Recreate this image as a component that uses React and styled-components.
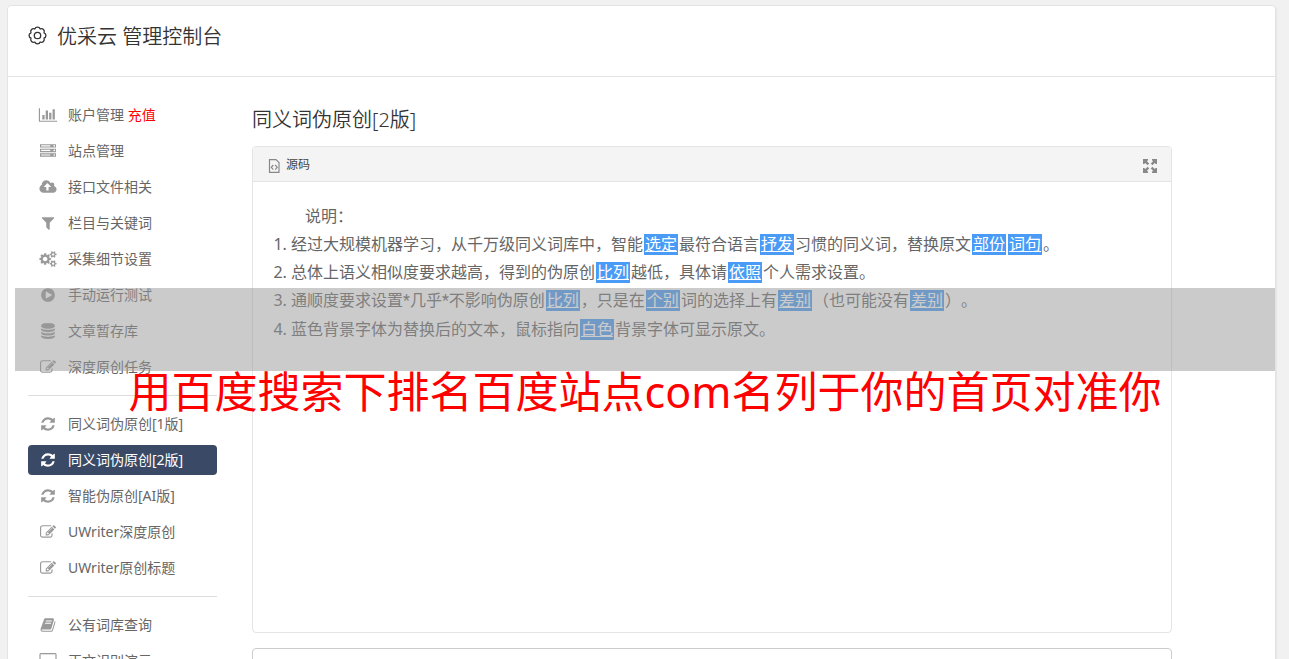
import React from "react";
import styled, { createGlobalStyle } from "styled-components";

const Global = createGlobalStyle`
  * { box-sizing: border-box; }
  body {
    margin: 0;
    background: #f1f1f1;
    color: #666;
    font-family: "Noto Sans", "Noto Sans CJK SC", sans-serif;
    font-size: 14px;
    text-spacing-trim: space-all;
  }
`;

const Page = styled.div`
  position: relative;
  height: 100vh;
  overflow: hidden;
  padding: 5px 13px 0 7px;
`;

const Card = styled.div`
  min-height: 100vh;
  background: #fff;
  border: 1px solid #e4e4e4;
  border-radius: 4px;
  box-shadow: 1px 1px 0 #e6e6e6;
`;

const CardHeader = styled.header`
  display: flex;
  align-items: center;
  gap: 10px;
  padding: 16px 20px 24px;
  border-bottom: 1px solid #e4e4e4;
  color: #333;

  svg {
    margin-bottom: 3px;
  }
`;

const Title = styled.h1`
  margin: 0;
  font-size: 20px;
  font-weight: 350;
  line-height: 30px;
`;

const Columns = styled.div`
  display: flex;
  gap: 35px;
  padding: 23px 103px 0 20px;
`;

const Sidebar = styled.nav`
  flex: 0 0 189px;
`;

const Menu = styled.ul`
  display: flex;
  flex-direction: column;
  gap: 6px;
  margin: 0;
  padding: 0;
  list-style: none;
`;

const Divider = styled.li`
  height: 1px;
  margin: 7px 0;
  background: #ddd;
`;

const MenuLink = styled.a`
  display: flex;
  align-items: center;
  gap: 10px;
  height: 30px;
  padding: 0 10px;
  border-radius: 4px;
  line-height: 30px;
  white-space: nowrap;
  text-decoration: none;
  color: ${(p) => (p.$active ? "#fff" : "#666")};
  background: ${(p) => (p.$active ? "#3a4a66" : "transparent")};

  svg {
    flex: 0 0 20px;
    height: 16px;
    fill: ${(p) => (p.$active ? "#fff" : "#999")};
  }
`;

const Recharge = styled.span`
  color: #f00;
`;

const Main = styled.main`
  flex: 1;
  min-width: 0;
  padding-top: 5px;
`;

const SectionTitle = styled.h2`
  margin: 0 0 11px;
  color: #333;
  font-size: 20px;
  font-weight: 350;
  line-height: 30px;
`;

const Editor = styled.section`
  border: 1px solid #e4e4e4;
  border-radius: 4px;
  overflow: hidden;
`;

const Toolbar = styled.div`
  display: flex;
  align-items: center;
  justify-content: space-between;
  height: 35px;
  padding: 1px 14px 0 15px;
  background: #f4f4f4;
  border-bottom: 1px solid #e4e4e4;
`;

const ToolButton = styled.button`
  display: flex;
  align-items: center;
  gap: 6px;
  padding: 0;
  border: 0;
  background: none;
  color: #444;
  font: inherit;
  font-size: 12px;
  line-height: 20px;

  svg {
    margin-top: 2px;
  }
`;

const Document = styled.div`
  min-height: 450px;
  padding: 20px;
  font-size: 16px;
  line-height: 28px;
`;

const Intro = styled.p`
  margin: 0;
  text-indent: 2em;
`;

const Rules = styled.ol`
  margin: 0;
  padding-left: 18px;
`;

const Swap = styled.a`
  display: inline-block;
  margin: 0 1px;
  padding: 0 1px;
  background: #4a9bf5;
  color: #fff;
  line-height: 21px;
  text-decoration: underline;
`;

const Star = styled.span`
  font-family: Roboto, sans-serif;
`;

const Source = styled.textarea`
  display: block;
  width: 100%;
  height: 120px;
  margin-top: 15px;
  border: 1px solid #ccc;
  border-radius: 4px;
  resize: none;
`;

const Banner = styled.div`
  position: absolute;
  top: 288px;
  left: 15px;
  right: 14px;
  pointer-events: none;
`;

const Shade = styled.div`
  height: 83px;
  background: rgba(151, 151, 151, 0.5);
`;

const Caption = styled.p`
  margin: 0;
  color: #f00;
  font-size: 43px;
  line-height: 42px;
  text-align: center;
  white-space: nowrap;
`;

const glyphs = {
  chart: [2048, "M640 896v512h-256v-512h256zm384-512v1024h-256v-1024h256zm1024 1152v128h-2048v-1536h128v1408h1920zm-640-896v768h-256v-768h256zm384-384v1152h-256v-1152h256z"],
  server: [1792, "M128 1408h1024v-128h-1024v128zm0-512h1024v-128h-1024v128zm1568 448q0-40-28-68t-68-28-68 28-28 68 28 68 68 28 68-28 28-68zm-1568-960h1024v-128h-1024v128zm1568 448q0-40-28-68t-68-28-68 28-28 68 28 68 68 28 68-28 28-68zm0-512q0-40-28-68t-68-28-68 28-28 68 28 68 68 28 68-28 28-68zm96 832v384h-1792v-384h1792zm0-512v384h-1792v-384h1792zm0-512v384h-1792v-384h1792z"],
  cloud: [2048, "M1344 864q0-14-9-23l-352-352q-9-9-23-9t-23 9l-351 351q-10 12-10 24 0 14 9 23t23 9h224v352q0 13 9.5 22.5t22.5 9.5h192q13 0 22.5-9.5t9.5-22.5v-352h224q13 0 22.5-9.5t9.5-22.5zm640 288q0 159-112.5 271.5t-271.5 112.5h-1088q-185 0-316.5-131.5t-131.5-316.5q0-130 70-240t188-165q-2-30-2-43 0-212 150-362t362-150q156 0 285.5 87t188.5 231q71-62 166-62 106 0 181 75t75 181q0 76-41 138 130 31 213.5 135.5t83.5 238.5z"],
  filter: [1792, "M1595 295q17 41-14 70l-493 493v742q0 42-39 59-13 5-25 5-27 0-45-19l-256-256q-19-19-19-45v-486l-493-493q-31-29-14-70 17-39 59-39h1280q42 0 59 39z"],
  cogs: [1920, "M896 896q0-106-75-181t-181-75-181 75-75 181 75 181 181 75 181-75 75-181zm768 512q0-52-38-90t-90-38-90 38-38 90q0 53 37.5 90.5t90.5 37.5 90.5-37.5 37.5-90.5zm0-1024q0-52-38-90t-90-38-90 38-38 90q0 53 37.5 90.5t90.5 37.5 90.5-37.5 37.5-90.5zm-384 421v185q0 10-7 19.5t-16 10.5l-155 24q-11 35-32 76 34 48 90 115 7 11 7 20 0 12-7 19-23 30-82.5 89.5t-78.5 59.5q-11 0-21-7l-115-90q-37 19-77 31-11 108-23 155-7 24-30 24h-186q-11 0-20-7.5t-10-17.5l-23-153q-34-10-75-31l-118 89q-7 7-20 7-11 0-21-8-144-133-144-160 0-9 7-19 10-14 41-53t47-61q-23-44-35-82l-152-24q-10-1-17-9.5t-7-19.5v-185q0-10 7-19.5t16-10.5l155-24q11-35 32-76-34-48-90-115-7-11-7-20 0-12 7-20 22-30 82-89t79-59q11 0 21 7l115 90q34-18 77-32 11-108 23-154 7-24 30-24h186q11 0 20 7.5t10 17.5l23 153q34 10 75 31l118-89q8-7 20-7 11 0 21 8 144 133 144 160 0 8-7 19-12 16-42 54t-45 60q23 48 34 82l152 23q10 2 17 10.5t7 19.5zm640 533v140q0 16-149 31-12 27-30 52 51 113 51 138 0 4-4 7-122 71-124 71-8 0-46-47t-52-68q-20 2-30 2t-30-2q-14 21-52 68t-46 47q-2 0-124-71-4-3-4-7 0-25 51-138-18-25-30-52-149-15-149-31v-140q0-16 149-31 13-29 30-52-51-113-51-138 0-4 4-7 4-2 35-20t59-34 30-16q8 0 46 46.5t52 67.5q20-2 30-2t30 2q51-71 92-112l6-2q4 0 124 70 4 3 4 7 0 25-51 138 17 23 30 52 149 15 149 31zm0-1024v140q0 16-149 31-12 27-30 52 51 113 51 138 0 4-4 7-122 71-124 71-8 0-46-47t-52-68q-20 2-30 2t-30-2q-14 21-52 68t-46 47q-2 0-124-71-4-3-4-7 0-25 51-138-18-25-30-52-149-15-149-31v-140q0-16 149-31 13-29 30-52-51-113-51-138 0-4 4-7 4-2 35-20t59-34 30-16q8 0 46 46.5t52 67.5q20-2 30-2t30 2q51-71 92-112l6-2q4 0 124 70 4 3 4 7 0 25-51 138 17 23 30 52 149 15 149 31z"],
  play: [1792, "M896 128q209 0 385.5 103t279.5 279.5 103 385.5-103 385.5-279.5 279.5-385.5 103-385.5-103-279.5-279.5-103-385.5 103-385.5 279.5-279.5 385.5-103zm384 823q32-18 32-55t-32-55l-544-320q-31-19-64-1-32 19-32 56v640q0 37 32 56 16 8 32 8 17 0 32-9z"],
  database: [1792, "M896 768q237 0 443-43t325-127v170q0 69-103 128t-280 93.5-385 34.5-385-34.5-280-93.5-103-128v-170q119 84 325 127t443 43zm0 768q237 0 443-43t325-127v170q0 69-103 128t-280 93.5-385 34.5-385-34.5-280-93.5-103-128v-170q119 84 325 127t443 43zm0-384q237 0 443-43t325-127v170q0 69-103 128t-280 93.5-385 34.5-385-34.5-280-93.5-103-128v-170q119 84 325 127t443 43zm0-1152q208 0 385 34.5t280 93.5 103 128v128q0 69-103 128t-280 93.5-385 34.5-385-34.5-280-93.5-103-128v-128q0-69 103-128t280-93.5 385-34.5z"],
  edit: [1792, "M888 1184l116-116-152-152-116 116v56h96v96h56zm440-720q-16-16-33 1l-350 350q-17 17-1 33t33-1l350-350q17-17 1-33zm80 594v190q0 119-84.5 203.5t-203.5 84.5h-832q-119 0-203.5-84.5t-84.5-203.5v-832q0-119 84.5-203.5t203.5-84.5h832q63 0 117 25 15 7 18 23 3 17-9 29l-49 49q-14 14-32 8-23-6-45-6h-832q-66 0-113 47t-47 113v832q0 66 47 113t113 47h832q66 0 113-47t47-113v-126q0-13 9-22l64-64q15-15 35-7t20 29zm-96-738l288 288-672 672h-288v-288zm444 132l-92 92-288-288 92-92q28-28 68-28t68 28l152 152q28 28 28 68t-28 68z"],
  refresh: [1792, "M1639 1056q0 5-1 7-64 268-268 434.5t-478 166.5q-146 0-282.5-55t-243.5-157l-129 129q-19 19-45 19t-45-19-19-45v-448q0-26 19-45t45-19h448q26 0 45 19t19 45-19 45l-137 137q71 66 161 102t187 36q134 0 250-65t186-179q11-17 53-117 8-23 30-23h192q13 0 22.5 9.5t9.5 22.5zm25-800v448q0 26-19 45t-45 19h-448q-26 0-45-19t-19-45 19-45l138-138q-148-137-349-137-134 0-250 65t-186 179q-11 17-53 117-8 23-30 23h-199q-13 0-22.5-9.5t-9.5-22.5v-7q65-268 270-434.5t480-166.5q146 0 284 55.5t245 156.5l130-129q19-19 45-19t45 19 19 45z"],
  book: [1792, "M1703 478q40 57 18 129l-275 906q-19 64-76.5 107.5t-122.5 43.5h-923q-77 0-148.5-53.5t-99.5-131.5q-24-67-2-127 0-4 3-27t4-37q1-8-3-21.5t-3-19.5q2-11 8-21t16.5-23.5 16.5-23.5q23-38 45-91.5t30-91.5q3-10 .5-30t-.5-28q3-11 17-28t17-23q21-36 42-92t25-90q1-9-2.5-32t.5-28q4-13 22-30.5t22-22.5q19-26 42.5-84.5t27.5-96.5q1-8-3-25.5t-2-26.5q2-8 9-18t18-23 17-21q8-12 16.5-30.5t15-35 16-36 19.5-32 26.5-23.5 36-11.5 47.5 5.5l-1 3q38-9 51-9h761q74 0 114 56t18 130l-274 906q-36 119-71.5 153.5t-128.5 34.5h-869q-27 0-38 15-11 16-1 43 24 70 144 70h923q29 0 56-15.5t35-41.5l300-987q7-22 5-57 38 15 59 43zm-1064 2q-4 13 2 22.5t20 9.5h608q13 0 25.5-9.5t16.5-22.5l21-64q4-13-2-22.5t-20-9.5h-608q-13 0-25.5 9.5t-16.5 22.5zm-83 256q-4 13 2 22.5t20 9.5h608q13 0 25.5-9.5t16.5-22.5l21-64q4-13-2-22.5t-20-9.5h-608q-13 0-25.5 9.5t-16.5 22.5z"],
  desktop: [1920, "M1792 992v-832q0-13-9.500-22.500t-22.500-9.500h-1600q-13 0-22.500 9.500t-9.500 22.500v832q0 13 9.500 22.500t22.500 9.500h1600q13 0 22.500-9.500t9.500-22.500zm128-832v1088q0 66-47 113t-113 47h-544q0 37 16 77.500t32 71 16 43.500q0 26-19 45t-45 19h-512q-26 0-45-19t-19-45q0-14 16-44t32-70 16-78h-544q-66 0-113-47t-47-113v-1088q0-66 47-113t113-47h1600q66 0 113 47t47 113z"],
};

const Glyph = ({ name }) => {
  const [width, path] = glyphs[name];
  return (
    <svg viewBox={`0 0 ${width} 1792`} aria-hidden="true">
      <path d={path} />
    </svg>
  );
};

const menu = [
  [
    { icon: "chart", label: "账户管理", extra: "充值" },
    { icon: "server", label: "站点管理" },
    { icon: "cloud", label: "接口文件相关" },
    { icon: "filter", label: "栏目与关键词" },
    { icon: "cogs", label: "采集细节设置" },
    { icon: "play", label: "手动运行测试" },
    { icon: "database", label: "文章暂存库" },
    { icon: "edit", label: "深度原创任务" },
  ],
  [
    { icon: "refresh", label: "同义词伪原创[1版]" },
    { icon: "refresh", label: "同义词伪原创[2版]", active: true },
    { icon: "refresh", label: "智能伪原创[AI版]" },
    { icon: "edit", label: "UWriter深度原创" },
    { icon: "edit", label: "UWriter原创标题" },
  ],
  [
    { icon: "book", label: "公有词库查询" },
    { icon: "desktop", label: "正文识别演示" },
  ],
];

const MenuItem = ({ icon, label, extra, active }) => (
  <li>
    <MenuLink href="#" $active={active}>
      <Glyph name={icon} />
      <span>
        {label}
        {extra && <Recharge> {extra}</Recharge>}
      </span>
    </MenuLink>
  </li>
);

const GearIcon = () => (
  <svg width="19" height="19" viewBox="-9.5 -9.5 19 19" fill="none" stroke="currentColor" strokeWidth="1.3" strokeLinejoin="round" aria-hidden="true">
    <path d="M-2.7-6.5A2.85 2.85 0 0 1 2.700-6.500A2.850 2.850 0 0 1 6.500-2.700A2.850 2.850 0 0 1 6.500 2.700A2.850 2.850 0 0 1 2.700 6.500A2.850 2.850 0 0 1-2.700 6.500A2.850 2.850 0 0 1-6.500 2.700A2.850 2.850 0 0 1-6.500-2.700A2.850 2.850 0 0 1-2.700-6.500z" />
    <circle r="3.2" />
  </svg>
);

const SourceIcon = () => (
  <svg width="12" height="14" viewBox="0 0 12 14" fill="none" stroke="#888" strokeWidth="1.2" aria-hidden="true">
    <path d="M1.500 .6H8L11 3.600V13.400H1.500z" />
    <path d="M5.300 6L3.300 8.300l2 2.300M7.200 6l2 2.300-2 2.300" />
  </svg>
);

const ExpandIcon = () => (
  <svg width="14" height="14" viewBox="0 0 14 14" fill="#888" aria-hidden="true">
    {[0, 90, 180, 270].map((angle) => (
      <path
        key={angle}
        transform={`rotate(${angle} 7 7)`}
        d="M0 0H5V1.200L3.900 2.300 6.200 4.600 4.600 6.200 2.300 3.900 1.200 5H0z"
      />
    ))}
  </svg>
);

const S = ({ children }) => <Swap href="#">{children}</Swap>;

export default function App() {
  return (
    <Page>
      <Global />
      <Card>
        <CardHeader>
          <GearIcon />
          <Title>优采云 管理控制台</Title>
        </CardHeader>
        <Columns>
          <Sidebar>
            <Menu>
              {menu.map((group, index) => (
                <React.Fragment key={index}>
                  {index > 0 && <Divider role="separator" />}
                  {group.map((item) => (
                    <MenuItem key={item.label} {...item} />
                  ))}
                </React.Fragment>
              ))}
            </Menu>
          </Sidebar>
          <Main>
            <SectionTitle>同义词伪原创[2版]</SectionTitle>
            <Editor>
              <Toolbar>
                <ToolButton type="button">
                  <SourceIcon />
                  源码
                </ToolButton>
                <ToolButton type="button" aria-label="全屏">
                  <ExpandIcon />
                </ToolButton>
              </Toolbar>
              <Document>
                <Intro>说明：</Intro>
                <Rules>
                  <li>
                    经过大规模机器学习，从千万级同义词库中，智能<S>选定</S>最符合语言<S>抒发</S>习惯的同义词，替换原文<S>部份</S><S>词句</S>。
                  </li>
                  <li>
                    总体上语义相似度要求越高，得到的伪原创<S>比列</S>越低，具体请<S>依照</S>个人需求设置。
                  </li>
                  <li>
                    通顺度要求设置<Star>*</Star>几乎<Star>*</Star>不影响伪原创<S>比列</S>，只是在<S>个别</S>词的选择上有<S>差别</S>（也可能没有<S>差别</S>）。
                  </li>
                  <li>
                    蓝色背景字体为替换后的文本，鼠标指向<S>白色</S>背景字体可显示原文。
                  </li>
                </Rules>
              </Document>
            </Editor>
            <Source aria-label="源码内容" />
          </Main>
        </Columns>
      </Card>
      <Banner>
        <Shade />
        <Caption>用百度搜索下排名百度站点com名列于你的首页对准你</Caption>
      </Banner>
    </Page>
  );
}
